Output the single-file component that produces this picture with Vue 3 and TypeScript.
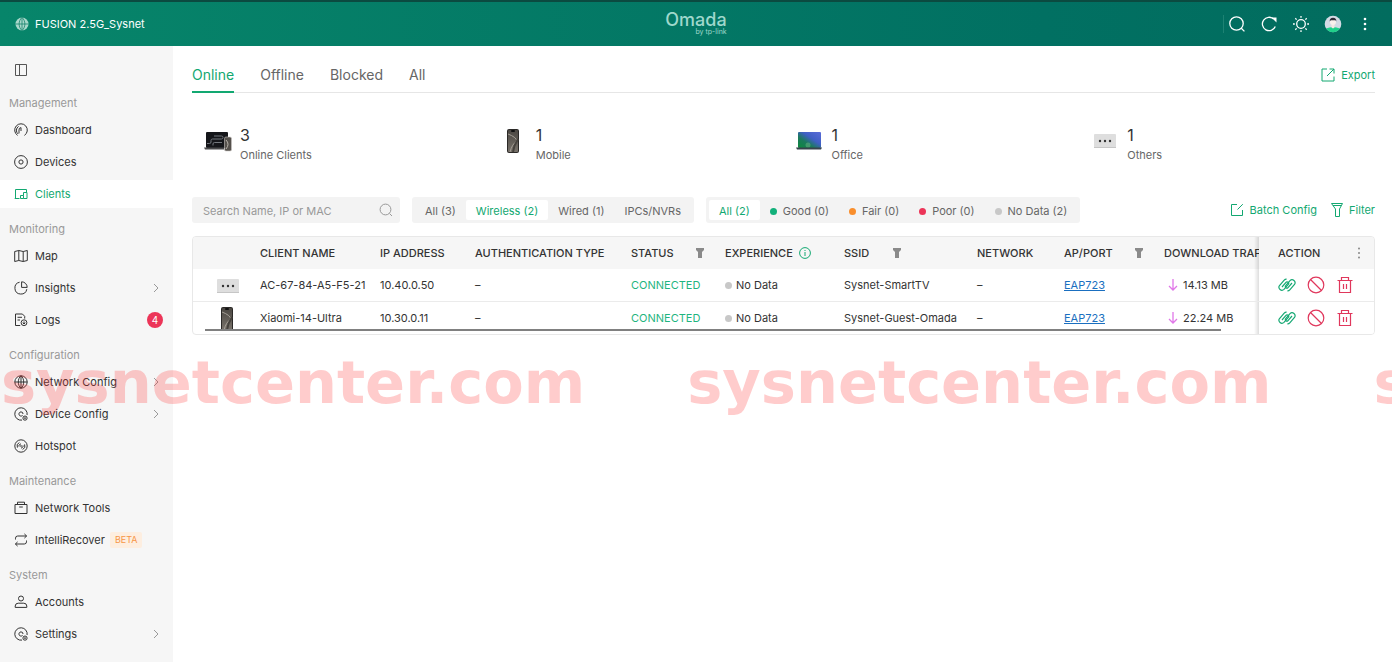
<script setup lang="ts">
import { ref } from 'vue'

interface NavItem {
  label: string
  icon: string
  arrow?: boolean
  badge?: number
  tag?: string
}
interface NavGroup {
  title: string
  items: NavItem[]
}

const icons: Record<string, string> = {
  dashboard: 'M3.6 12.4A6.3 6.3 0 1 1 10.4 12.4M5 10.4V7A2.2 2.2 0 0 1 7 4.6V8M4.2 11A4.6 4.6 0 0 1 4.6 3.4',
  devices: 'M7 .6A6.4 6.4 0 1 1 7 13.4A6.4 6.4 0 1 1 7 .6M7 4.9A2.1 2.1 0 1 1 7 9.1A2.1 2.1 0 1 1 7 4.9',
  clients: 'M5.5 11.5H.7M1.5 11.5V2.5H12.5V5.5M6.5 11.5V8.5H9.5V11.5ZM9.5 11.5H13V5.5H9.5V8.5',
  map: 'M.7 2.5L4.8 1.5L9.2 2.5L13.3 1.5V11.5L9.2 12.5L4.8 11.5L.7 12.5ZM4.8 1.5V11.5M9.2 2.5V12.5',
  insights: 'M5.6 1.2A6 6 0 1 0 12.8 8.2M7.6 .8V6.4H13.2A5.6 5.6 0 0 0 7.6 .8Z',
  logs: 'M6.2 12.5H1.5V1H8.4L10.7 3.3V5.6M3.5 4.3H8M3.5 7H6M10 6.8A2.9 2.9 0 1 1 10 12.6A2.9 2.9 0 1 1 10 6.8M10 8.4V11M8.7 9.7L10 11L11.3 9.7',
  globe: 'M7 .8A6.2 6.2 0 1 1 7 13.2A6.2 6.2 0 1 1 7 .8M.8 7H13.2M7 .8V13.2M7 .8C3.4 3.6 3.4 10.4 7 13.2M7 .8C10.6 3.6 10.6 10.4 7 13.2',
  gear: 'M8 13.1A6.2 6.2 0 1 1 13.1 8M7 4.9A2.1 2.1 0 1 0 8.6 8.4M9 7A2 2 0 0 0 7 4.9M11 9A2.1 2.1 0 1 1 11 13.2A2.1 2.1 0 1 1 11 9M11 10.4V11.8M10.3 11.1H11.7',
  hotspot: 'M7 .8A6.2 6.2 0 1 1 7 13.2A6.2 6.2 0 1 1 7 .8M3.4 8.6A3.9 3.9 0 0 1 5.4 3.5M10.6 5.4A3.9 3.9 0 0 1 8.6 10.5M5 7.6A2 2 0 0 1 7 5M9 6.4A2 2 0 0 1 7 9M7 6.4V7.6M6.4 7H7.6',
  tools: 'M1 3.5H13V12.5H1ZM3.5 3.5V1.2H10.5V3.5M5.2 6H8.8',
  recover: 'M1.5 6.5V5.2A2.2 2.2 0 0 1 3.7 3H12.6M10.4 .9L12.6 3L10.4 5.1M12.5 7.5V8.8A2.2 2.2 0 0 1 10.3 11H1.4M3.6 8.9L1.4 11L3.6 13.1',
  user: 'M7 1A2.5 2.5 0 1 1 7 6A2.5 2.5 0 1 1 7 1M1.2 12.4V11A3 3 0 0 1 4.2 8.2H9.8A3 3 0 0 1 12.8 11V12.4Z',
}

const groups: NavGroup[] = [
  {
    title: 'Management',
    items: [
      { label: 'Dashboard', icon: 'dashboard' },
      { label: 'Devices', icon: 'devices' },
      { label: 'Clients', icon: 'clients' },
    ],
  },
  {
    title: 'Monitoring',
    items: [
      { label: 'Map', icon: 'map' },
      { label: 'Insights', icon: 'insights', arrow: true },
      { label: 'Logs', icon: 'logs', badge: 4 },
    ],
  },
  {
    title: 'Configuration',
    items: [
      { label: 'Network Config', icon: 'globe', arrow: true },
      { label: 'Device Config', icon: 'gear', arrow: true },
      { label: 'Hotspot', icon: 'hotspot' },
    ],
  },
  {
    title: 'Maintenance',
    items: [
      { label: 'Network Tools', icon: 'tools' },
      { label: 'IntelliRecover', icon: 'recover', tag: 'BETA' },
    ],
  },
  {
    title: 'System',
    items: [
      { label: 'Accounts', icon: 'user' },
      { label: 'Settings', icon: 'gear', arrow: true },
    ],
  },
]

const activeNav = ref('Clients')
const tabs = ['Online', 'Offline', 'Blocked', 'All']
const activeTab = ref('Online')

const stats = [
  { kind: 'all', count: 3, label: 'Online Clients' },
  { kind: 'phone', count: 1, label: 'Mobile' },
  { kind: 'laptop', count: 1, label: 'Office' },
  { kind: 'other', count: 1, label: 'Others' },
]

const types = ['All (3)', 'Wireless (2)', 'Wired (1)', 'IPCs/NVRs']
const activeType = ref('Wireless (2)')
const levels = [
  { label: 'All (2)', tone: '' },
  { label: 'Good (0)', tone: 'good' },
  { label: 'Fair (0)', tone: 'fair' },
  { label: 'Poor (0)', tone: 'poor' },
  { label: 'No Data (2)', tone: 'none' },
]
const activeLevel = ref('All (2)')
const search = ref('')

const rows = [
  { kind: 'other', name: 'AC-67-84-A5-F5-21', ip: '10.40.0.50', ssid: 'Sysnet-SmartTV', ap: 'EAP723', down: '14.13 MB' },
  { kind: 'phone', name: 'Xiaomi-14-Ultra', ip: '10.30.0.11', ssid: 'Sysnet-Guest-Omada', ap: 'EAP723', down: '22.24 MB' },
]
</script>

<template>
  <div class="app">
    <svg class="defs" aria-hidden="true">
      <defs>
        <linearGradient id="screen" x1="0" y1="1" x2="1" y2="0">
          <stop offset="0" stop-color="#0c8a3c" />
          <stop offset=".35" stop-color="#1b7a5c" />
          <stop offset=".6" stop-color="#3f5fc4" />
          <stop offset="1" stop-color="#5a6bd8" />
        </linearGradient>
        <linearGradient id="glass" x1="0" y1="0" x2="0" y2="1">
          <stop offset="0" stop-color="#4b4742" />
          <stop offset="1" stop-color="#78726a" />
        </linearGradient>
        <symbol id="dev-phone" viewBox="0 0 28 28">
          <rect x="7" y="2" width="12" height="24" rx="2" fill="#2b2927" />
          <rect x="8" y="3" width="10" height="22" rx="1" fill="url(#glass)" />
          <path d="M8 7Q16 10 17 14Q12 17 10 25" fill="none" stroke="#a59f96" />
          <path d="M18 12Q14 18 13 25" fill="none" stroke="#46423d" stroke-width="2" />
          <rect x="11" y="3" width="4" height="2" rx="1" fill="#111" />
        </symbol>
        <symbol id="dev-laptop" viewBox="0 0 28 28">
          <rect x="2" y="5" width="23" height="16" rx="1" fill="url(#screen)" />
          <circle cx="12" cy="18" r="2.500" fill="#9fd9a0" opacity=".3" />
          <path d="M0 20.500H26L25 22.500H1Z" fill="#39434d" />
        </symbol>
        <symbol id="dev-other" viewBox="0 0 28 28">
          <rect x="3" y="7" width="22" height="14" rx="1" fill="#dedede" />
          <rect x="3" y="20" width="22" height="1" fill="#c6c6c6" />
          <circle cx="9" cy="14" r="1.200" fill="#333" />
          <circle cx="14" cy="14" r="1.200" fill="#333" />
          <circle cx="19" cy="14" r="1.200" fill="#333" />
        </symbol>
        <symbol id="dev-all" viewBox="0 0 28 28">
          <rect x="2" y="5" width="22" height="16" rx="1" fill="#15161a" />
          <path d="M3 16.500H5.500Q7 16.500 7 15V13.500Q7 12 8.500 12H17.500Q19 12 19 10.500Q19 9 17.500 9H10M9 18.500V17Q9 15.500 10.500 15.500H18" fill="none" stroke="#74787e" />
          <path d="M0 20.500H20V22.500H1Z" fill="#4a4a4c" />
          <rect x="20.500" y="10" width="7" height="14" rx="1.500" fill="#55514c" stroke="#c9c6c2" stroke-width=".6" />
          <path d="M22 13Q26 17 22 22" fill="none" stroke="#b9b4ac" />
        </symbol>
        <symbol id="funnel" viewBox="0 0 10 12">
          <path d="M1 1H9V3L7 5V11H3V5L1 3Z" />
        </symbol>
      </defs>
    </svg>

    <header class="topbar">
      <div class="site">
        <svg class="i14" viewBox="0 0 14 14" aria-hidden="true">
          <circle cx="7" cy="7" r="6.500" fill="#a9d8cb" stroke="none" />
          <path d="M.5 7H13.500M7 .5V13.500M7 .5C3.200 3.600 3.200 10.400 7 13.500M7 .5C10.800 3.600 10.800 10.400 7 13.500" fill="none" stroke="#17836c" stroke-width=".8" />
        </svg>
        <span>FUSION 2.5G_Sysnet</span>
      </div>
      <div class="brand">
        <span class="brand-name">Omada</span>
        <span class="brand-by">by tp-link</span>
      </div>
      <div class="tools">
        <button type="button" class="bare" aria-label="Search">
          <svg class="i18" viewBox="0 0 18 18"><circle cx="8.500" cy="8.500" r="6.700" /><path d="M13.300 13.300L16.400 16.400" /></svg>
        </button>
        <button type="button" class="bare" aria-label="Refresh">
          <svg class="i18" viewBox="0 0 18 18"><path d="M15.300 11.500A6.700 6.700 0 1 1 13.600 4" /><path d="M11.500 2.500H16.500V7.500Z" class="solid" /></svg>
        </button>
        <button type="button" class="bare" aria-label="Theme">
          <svg class="i18" viewBox="0 0 18 18"><circle cx="9" cy="9" r="4.300" /><path d="M9 1V2.800M9 15.200V17M1 9H2.800M15.200 9H17M3.300 3.300L4.600 4.600M13.400 13.400L14.700 14.700M3.300 14.700L4.600 13.400M13.400 4.600L14.700 3.300" /></svg>
        </button>
        <button type="button" class="bare" aria-label="Account">
          <svg class="i18 avatar" viewBox="0 0 18 18">
            <circle cx="9" cy="9" r="8.300" fill="#d3dae4" />
            <path d="M2 13.500Q9 10.500 16 13.500A8.300 8.300 0 0 1 2 13.500Z" fill="#1fd08a" />
            <path d="M7.500 9H10.500V12.500L9 13.500L7.500 12.500Z" fill="#f6e9e2" />
            <circle cx="9" cy="7" r="3" fill="#fbf1ec" />
            <path d="M5.700 6.500Q5.500 2.800 9 2.800T12.300 6.500L11.500 5.200H6.800Z" fill="#2d2a35" />
          </svg>
        </button>
        <button type="button" class="bare" aria-label="More">
          <svg class="i18 dots" viewBox="0 0 18 18"><circle cx="9" cy="4" r="1.300" /><circle cx="9" cy="9" r="1.300" /><circle cx="9" cy="14" r="1.300" /></svg>
        </button>
      </div>
    </header>

    <div class="body">
      <nav class="sidebar" aria-label="Main">
        <button type="button" class="bare collapse" aria-label="Collapse menu">
          <svg class="i14" viewBox="0 0 14 14"><path d="M1.500 1.500H12.500V12.500H1.500ZM5.500 1.500V12.500" /></svg>
        </button>
        <section v-for="g in groups" :key="g.title" class="group">
          <h2>{{ g.title }}</h2>
          <ul>
            <li v-for="item in g.items" :key="item.label">
              <a href="#" :class="{ active: item.label === activeNav }" @click.prevent="activeNav = item.label">
                <svg class="i14" viewBox="0 0 14 14" aria-hidden="true"><path :d="icons[item.icon]" /></svg>
                <span>{{ item.label }}</span>
                <span v-if="item.tag" class="tag">{{ item.tag }}</span>
                <svg v-if="item.arrow" class="arrow" viewBox="0 0 6 10" aria-hidden="true"><path d="M1 1L5 5L1 9" /></svg>
                <span v-if="item.badge" class="badge">{{ item.badge }}</span>
              </a>
            </li>
          </ul>
        </section>
      </nav>

      <main class="content">
        <div class="tabs">
          <button
            v-for="t in tabs"
            :key="t"
            type="button"
            class="tab"
            :class="{ active: t === activeTab }"
            @click="activeTab = t"
          >{{ t }}</button>
          <button type="button" class="action export">
            <svg class="i14" viewBox="0 0 14 14"><path d="M6 1H1V13H13V8.500M8.500 1H13V5.500M13 1L6 8" /></svg>
            Export
          </button>
        </div>

        <div class="stats">
          <div v-for="s in stats" :key="s.kind" class="stat">
            <svg class="device" aria-hidden="true"><use :href="'#dev-' + s.kind" /></svg>
            <div>
              <div class="count">{{ s.count }}</div>
              <div class="caption">{{ s.label }}</div>
            </div>
          </div>
        </div>

        <div class="filters">
          <label class="search">
            <input v-model="search" type="text" placeholder="Search Name, IP or MAC" aria-label="Search Name, IP or MAC" />
            <svg class="i14" viewBox="0 0 14 14" aria-hidden="true"><circle cx="6.500" cy="6.500" r="5.400" /><path d="M10.500 10.500L13 13" /></svg>
          </label>
          <div class="segment">
            <button
              v-for="t in types"
              :key="t"
              type="button"
              :class="{ active: t === activeType }"
              @click="activeType = t"
            >{{ t }}</button>
          </div>
          <div class="segment levels">
            <button
              v-for="l in levels"
              :key="l.label"
              type="button"
              :class="{ active: l.label === activeLevel }"
              @click="activeLevel = l.label"
            ><i v-if="l.tone" class="dot" :class="l.tone"></i>{{ l.label }}</button>
          </div>
          <div class="right">
            <button type="button" class="action">
              <svg class="i14" viewBox="0 0 14 14"><path d="M7 1.500H1.500V12.500H12.500V7M12.800 1.200L7.500 6.500" /></svg>
              Batch Config
            </button>
            <button type="button" class="action">
              <svg class="filter-icon" viewBox="0 0 12 16"><path d="M.5 1.500H11.500L8.500 7V14.500H4.500V7ZM2 3.500H10" /></svg>
              Filter
            </button>
          </div>
        </div>

        <div class="grid">
          <table>
            <colgroup>
              <col class="c-pic" /><col class="c-name" /><col class="c-ip" /><col class="c-auth" /><col class="c-status" />
              <col class="c-exp" /><col class="c-ssid" /><col class="c-net" /><col class="c-ap" /><col class="c-down" /><col class="c-act" />
            </colgroup>
            <thead>
              <tr>
                <th aria-label="Device"></th>
                <th>CLIENT NAME</th>
                <th>IP ADDRESS</th>
                <th>AUTHENTICATION TYPE</th>
                <th><div class="head">STATUS<svg class="funnel push" aria-hidden="true"><use href="#funnel" /></svg></div></th>
                <th>
                  <div class="head">EXPERIENCE
                    <svg class="info" viewBox="0 0 12 12" aria-hidden="true"><circle cx="6" cy="6" r="5.400" /><path d="M6 5V9M6 3V4" /></svg>
                  </div>
                </th>
                <th><div class="head">SSID<svg class="funnel wide" aria-hidden="true"><use href="#funnel" /></svg></div></th>
                <th>NETWORK</th>
                <th><div class="head">AP/PORT<svg class="funnel push" aria-hidden="true"><use href="#funnel" /></svg></div></th>
                <th>DOWNLOAD TRAFFIC</th>
                <th class="pinned">
                  <div class="head">ACTION
                    <button type="button" class="bare more" aria-label="Columns">
                      <svg viewBox="0 0 4 12"><circle cx="2" cy="1.500" r="1" /><circle cx="2" cy="6" r="1" /><circle cx="2" cy="10.500" r="1" /></svg>
                    </button>
                  </div>
                </th>
              </tr>
            </thead>
            <tbody>
              <tr v-for="r in rows" :key="r.name">
                <td class="pic"><svg class="device" aria-hidden="true"><use :href="'#dev-' + r.kind" /></svg></td>
                <td>{{ r.name }}</td>
                <td>{{ r.ip }}</td>
                <td>–</td>
                <td class="ok">CONNECTED</td>
                <td><i class="dot none"></i>No Data</td>
                <td>{{ r.ssid }}</td>
                <td>–</td>
                <td><a href="#" class="link" @click.prevent>{{ r.ap }}</a></td>
                <td>
                  <div class="down">
                    <svg viewBox="0 0 10 12" aria-hidden="true"><path d="M5 0V11M1 7L5 11L9 7" /></svg>{{ r.down }}
                  </div>
                </td>
                <td class="pinned">
                  <div class="ops">
                    <button type="button" class="bare green" aria-label="Reconnect">
                      <svg class="i18" viewBox="1 1 18 18">
                        <path d="M5 12L9 7.400A1.500 1.500 0 0 1 11.300 9.400L7 14.400A3 3 0 0 1 2.500 10.500L7.200 5.200A3 3 0 0 1 9.600 4.200" />
                        <path d="M15 8L11 12.600A1.500 1.500 0 0 1 8.700 10.600L13 5.600A3 3 0 0 1 17.500 9.500L12.800 14.800A3 3 0 0 1 10.400 15.800" />
                      </svg>
                    </button>
                    <button type="button" class="bare red" aria-label="Block">
                      <svg class="i18" viewBox="0 0 18 18"><circle cx="9" cy="9" r="7.800" /><path d="M3.500 3.500L14.500 14.500" /></svg>
                    </button>
                    <button type="button" class="bare red" aria-label="Delete">
                      <svg class="i18" viewBox="0 0 18 18"><path d="M1.500 4.500H16.500M5.500 4.500V1.500H12.500V4.500M3.500 4.500V16.500H14.500V4.500M7.500 8V13M10.500 8V13" /></svg>
                    </button>
                  </div>
                </td>
              </tr>
            </tbody>
          </table>
          <div class="scrollbar"></div>
        </div>
      </main>
    </div>

    <div class="watermark" aria-hidden="true">
      <span>sysnetcenter.com</span><span>sysnetcenter.com</span><span>sysnetcenter.com</span>
    </div>
  </div>
</template>

<style>
body {
  margin: 0;
}
</style>

<style scoped>
.app {
  --green: #12a871;
  --ink: #333;
  position: relative;
  display: flex;
  flex-direction: column;
  min-height: 100vh;
  overflow: hidden;
  background: #fff;
  color: var(--ink);
  font: 11px/16px Inter, "Liberation Sans", sans-serif;
}
.app *,
.app *::before {
  box-sizing: border-box;
}
.defs {
  position: absolute;
  width: 0;
  height: 0;
}
svg {
  display: block;
  flex: none;
  fill: none;
  stroke: currentColor;
}
button {
  padding: 0;
  border: 0;
  background: none;
  color: inherit;
  font: inherit;
  white-space: nowrap;
  cursor: pointer;
}
a {
  color: inherit;
  text-decoration: none;
}
.bare {
  display: flex;
}
.i14 {
  width: 14px;
  height: 14px;
}
.i18 {
  width: 18px;
  height: 18px;
}

.topbar {
  display: grid;
  grid-template-columns: 1fr auto 1fr;
  align-items: center;
  height: 46px;
  padding: 0 15px;
  border-top: 2px solid #0b4a40;
  background: linear-gradient(90deg, #07856a, #017062 75%, #026c5e);
  color: #fff;
}
.site {
  display: flex;
  align-items: center;
  gap: 6px;
}
.brand {
  display: flex;
  flex-direction: column;
  align-items: flex-end;
  color: #9fd8cc;
}
.brand-name {
  font: 500 18px/16px Inter, sans-serif;
}
.brand-by {
  font: 7px/8px Inter, sans-serif;
}
.tools {
  display: flex;
  justify-self: end;
  gap: 14px;
  margin-right: 3px;
  padding-left: 4px;
  border-left: 1px solid #1d8273;
}
.tools svg {
  stroke-width: 1.3;
}
.tools .solid {
  fill: currentColor;
  stroke: none;
}
.tools .avatar,
.tools .dots {
  stroke: none;
}
.tools .dots {
  fill: currentColor;
}

.body {
  display: flex;
  flex: 1;
}
.sidebar {
  display: flex;
  flex: none;
  flex-direction: column;
  gap: 8px;
  width: 173px;
  padding: 17px 0 12px;
  background: #f6f6f6;
}
.collapse {
  margin: 0 14px 5px;
  width: 14px;
  color: #555;
}
h2 {
  margin: 0;
  padding-left: 9px;
  color: #999;
  font: inherit;
  line-height: 26px;
}
ul {
  display: flex;
  flex-direction: column;
  gap: 4px;
  margin: 0;
  padding: 0;
  list-style: none;
}
li a {
  display: flex;
  align-items: center;
  height: 28px;
  padding: 0 10px 0 14px;
}
li a.active {
  background: #fff;
  color: var(--green);
}
li a > span {
  margin-left: 7px;
}
li a .arrow {
  width: 6px;
  height: 10px;
  margin: 0 4px 0 auto;
  stroke: #999;
}
li a .badge {
  margin-left: auto;
  width: 16px;
  height: 16px;
  border-radius: 50%;
  background: #ec3558;
  color: #fff;
  font-size: 10px;
  text-align: center;
}
li a .tag {
  margin-left: 5px;
  padding: 0 5px;
  border-radius: 2px;
  background: #fdeee0;
  color: #f79646;
  font-size: 9px;
}

.content {
  flex: 1;
  min-width: 0;
  padding: 12px 17px 24px 19px;
}
.tabs {
  display: flex;
  gap: 26px;
  height: 35px;
  border-bottom: 1px solid #e6e6e6;
}
.tab {
  height: 35px;
  border-bottom: 2px solid transparent;
  color: #666;
  font-size: 14px;
}
.tab.active {
  border-color: var(--green);
  color: var(--green);
}
.action {
  display: flex;
  align-items: center;
  gap: 6px;
  color: var(--green);
}
.export {
  margin-left: auto;
}
.stats {
  display: grid;
  grid-template-columns: repeat(4, 1fr);
  margin: 32px 0 32px;
}
.stat {
  display: flex;
  gap: 8px;
  padding-left: 12px;
}
.device {
  width: 28px;
  height: 28px;
  margin-top: 2px;
  stroke: none;
}
.count {
  font-size: 16px;
  line-height: 20px;
}
.caption {
  color: #666;
  line-height: 20px;
}
.filters {
  display: flex;
  align-items: center;
  gap: 12px;
}
.search {
  display: flex;
  align-items: center;
  width: 208px;
  height: 26px;
  padding: 0 7px 0 11px;
  border-radius: 3px;
  background: #f3f3f3;
  color: #999;
}
.search input {
  flex: 1;
  min-width: 0;
  padding: 2px 0 0;
  border: 0;
  outline: 0;
  background: none;
  color: var(--ink);
  font: inherit;
}
.search input::placeholder {
  color: #999;
  opacity: 1;
}
.segment {
  display: flex;
  height: 26px;
  padding: 3px;
  border-radius: 3px;
  background: #f3f3f3;
  color: #666;
}
.segment button {
  padding: 2px 10px 0;
}
.segment button.active {
  border-radius: 2px;
  background: #fff;
  color: var(--green);
}
.dot {
  display: inline-block;
  width: 7px;
  height: 7px;
  margin-right: 6px;
  border-radius: 50%;
}
.good {
  background: #12b07a;
}
.fair {
  background: #f98e2c;
}
.poor {
  background: #ec3558;
}
.none {
  background: #c8c8c8;
}
.right {
  display: flex;
  gap: 14px;
  margin-left: auto;
}
.filter-icon {
  width: 12px;
  height: 16px;
}

.grid {
  position: relative;
  margin-top: 13px;
  border: 1px solid #e8e8e8;
  border-radius: 4px;
  overflow: hidden;
}
table {
  width: 1247px;
  min-width: 100%;
  table-layout: fixed;
  border-collapse: separate;
  border-spacing: 0;
}
.c-pic { width: 67px; }
.c-name { width: 120px; }
.c-ip { width: 95px; }
.c-auth { width: 156px; }
.c-status { width: 94px; }
.c-exp { width: 119px; }
.c-ssid { width: 133px; }
.c-net { width: 87px; }
.c-ap { width: 100px; }
.c-down { width: 161px; }
.c-act { width: 115px; }
th,
td {
  height: 32px;
  padding: 0;
  text-align: left;
  white-space: nowrap;
}
th {
  background: #f6f6f6;
  font-weight: 500;
}
tbody tr + tr td {
  height: 33px;
  border-top: 1px solid #ebebeb;
}
.pic .device {
  margin: 2px 0 0 21px;
}
.head {
  display: flex;
  align-items: center;
}
.funnel {
  width: 10px;
  height: 12px;
  margin-left: 23px;
  fill: #8a8a8a;
  stroke: none;
}
.funnel.push {
  margin: 0 20px 0 auto;
}
.info {
  width: 12px;
  height: 12px;
  margin-left: 6px;
  color: var(--green);
}
.ok {
  color: #1fb57f;
}
td .dot {
  margin-right: 4px;
}
.link {
  color: #1a6fc0;
  text-decoration: underline;
}
.down {
  display: flex;
  align-items: center;
  gap: 5px;
  padding-left: 4px;
}
.down svg {
  width: 10px;
  height: 12px;
  color: #e077e8;
  stroke-width: 1.3;
}
th.pinned,
td.pinned {
  position: sticky;
  right: 0;
  padding-left: 19px;
  background: #fff;
}
th.pinned {
  background: #f6f6f6;
}
.pinned::before {
  position: absolute;
  top: 0;
  bottom: 0;
  left: -5px;
  width: 5px;
  background: linear-gradient(90deg, transparent, rgba(0, 0, 0, 0.13));
  content: "";
}
.more {
  margin: 0 13px 0 auto;
}
.more svg {
  width: 4px;
  height: 12px;
  fill: #888;
  stroke: none;
}
.ops {
  display: flex;
  gap: 11px;
}
.ops svg {
  stroke-width: 1.2;
}
.green {
  color: #15a873;
}
.red {
  color: #e0375c;
}
.scrollbar {
  position: absolute;
  bottom: 3px;
  left: 12px;
  right: 153px;
  height: 2px;
  background: #808080;
}

.watermark {
  position: absolute;
  top: 350px;
  left: 1px;
  display: flex;
  gap: 102px;
  color: rgba(255, 40, 40, 0.24);
  font: bold 59px/66px "DejaVu Sans", sans-serif;
  white-space: nowrap;
  pointer-events: none;
}
</style>
